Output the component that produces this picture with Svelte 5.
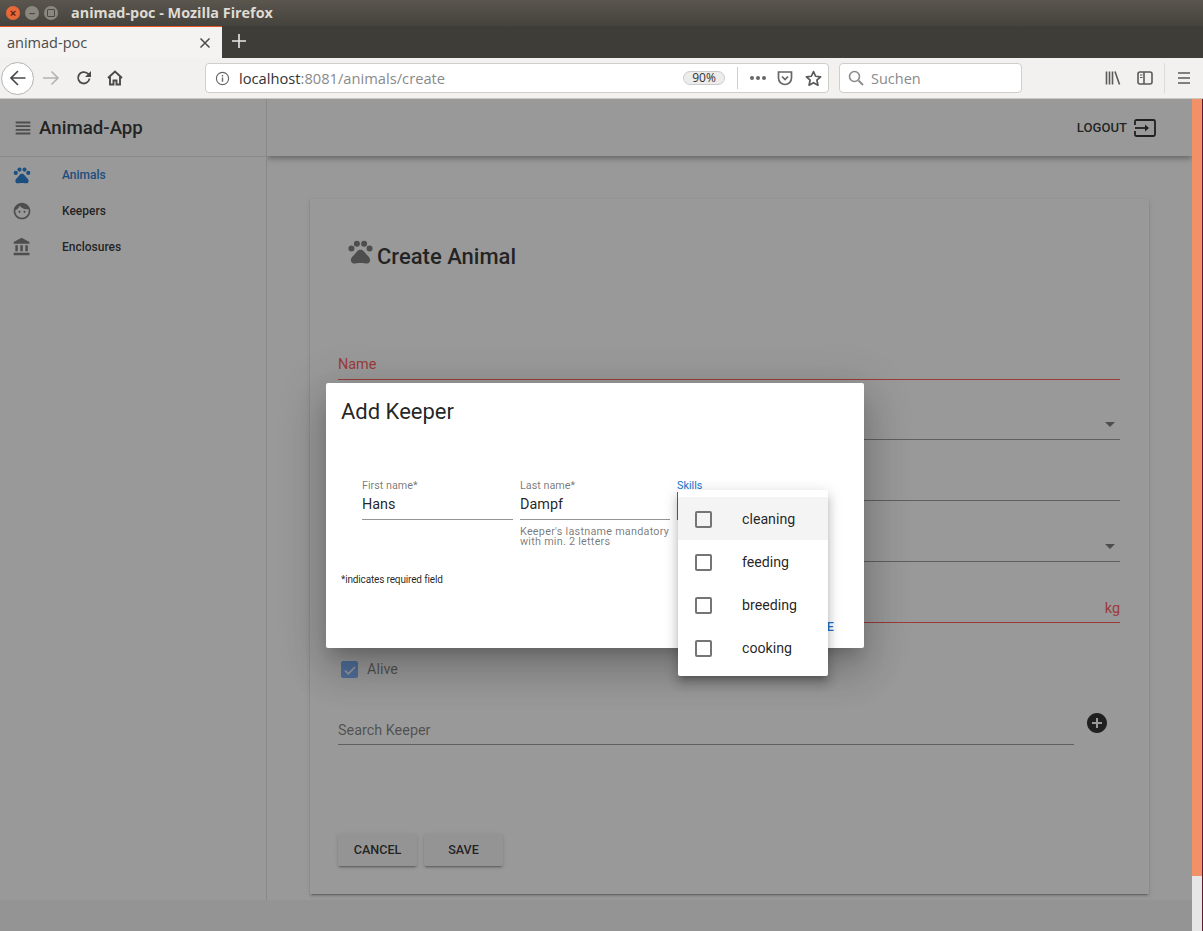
<script>
    const navItems = [
        { label: 'Animals', icon: 'pets', active: true },
        { label: 'Keepers', icon: 'face', active: false },
        { label: 'Enclosures', icon: 'bank', active: false }
    ];
    const skills = ['cleaning', 'feeding', 'breeding', 'cooking'];
    const icons = {
        pets: 'M4.5 7a2.5 2.5 0 1 0 0 5 2.5 2.5 0 0 0 0-5zM9 3a2.5 2.5 0 1 0 0 5 2.5 2.5 0 0 0 0-5zM15 3a2.5 2.5 0 1 0 0 5 2.5 2.5 0 0 0 0-5zM19.5 7a2.5 2.5 0 1 0 0 5 2.5 2.5 0 0 0 0-5zM17.34 14.86c-.87-1.02-1.6-1.89-2.48-2.91-.46-.54-1.05-1.08-1.75-1.32-.11-.04-.22-.07-.33-.09-.25-.04-.52-.04-.78-.04s-.53 0-.79.05c-.11.02-.22.05-.33.09-.7.24-1.28.78-1.75 1.32-.87 1.02-1.6 1.89-2.48 2.91-1.31 1.31-2.92 2.76-2.62 4.79.29 1.02 1.02 2.03 2.33 2.32.73.15 3.06-.44 5.54-.44h.18c2.48 0 4.81.58 5.54.44 1.31-.29 2.04-1.31 2.33-2.32.31-2.04-1.3-3.49-2.61-4.8z',
        face: 'M9 11.75c-.69 0-1.25.56-1.25 1.25s.56 1.25 1.25 1.25 1.25-.56 1.25-1.25-.56-1.25-1.25-1.25zm6 0c-.69 0-1.25.56-1.25 1.25s.56 1.25 1.25 1.25 1.25-.56 1.25-1.25-.56-1.25-1.25-1.25zM12 2C6.48 2 2 6.48 2 12s4.48 10 10 10 10-4.48 10-10S17.52 2 12 2zm0 18c-4.41 0-8-3.59-8-8 0-.29.02-.58.05-.86 2.36-1.05 4.23-2.98 5.21-5.37C11.07 8.33 14.05 10 17.42 10c.78 0 1.53-.09 2.25-.26.21.71.33 1.47.33 2.26 0 4.41-3.59 8-8 8z',
        bank: 'M4 10v7h3v-7H4zm6 0v7h3v-7h-3zM2 22h19v-3H2v3zm14-12v7h3v-7h-3zm-4.5-9L2 6v2h19V6l-9.5-5z'
    };
</script>

<div class="window">
    <header class="titlebar">
        <div class="controls">
            <span class="ctl close">×</span>
            <span class="ctl">–</span>
            <span class="ctl"><i class="square"></i></span>
        </div>
        <span class="wintitle">animad-poc - Mozilla Firefox</span>
    </header>

    <div class="tabbar">
        <div class="tab">
            <span>animad-poc</span>
            <svg class="tabclose" viewBox="0 0 12 12" width="12" height="12"><path d="M1.5 1.5l9 9M10.5 1.5l-9 9" stroke="#4a4a4a" stroke-width="1.5" /></svg>
        </div>
        <svg class="newtab" viewBox="0 0 14 14" width="14" height="14"><path d="M7 0v14M0 7h14" stroke="#e8e8e6" stroke-width="1.6" /></svg>
    </div>

    <div class="navbar">
        <div class="backbtn">
            <svg viewBox="0 0 18 18" width="18" height="18"><path d="M2 9h14.5M9 2L2 9l7 7" fill="none" stroke="#4a4a4a" stroke-width="1.7" /></svg>
        </div>
        <svg class="fwd" viewBox="0 0 18 18" width="18" height="18"><path d="M1 9h15M9.5 2.5L16 9l-6.500 6.500" fill="none" stroke="#b2b2b2" stroke-width="1.6" /></svg>
        <svg class="reload" viewBox="0 0 16 16" width="16" height="16"><path d="M13.500 8.500A5.700 5.700 0 1 1 11.500 3.400L14 5.500" fill="none" stroke="#4a4a4a" stroke-width="1.800" /><path d="M15 1v6H9z" fill="#4a4a4a" /></svg>
        <svg class="home" viewBox="0 0 16 16" width="16" height="16"><path d="M1 8l7-6.500L15 8M3 7v7.500h3.500v-4h3v4H13V7" fill="none" stroke="#4a4a4a" stroke-width="1.900" /></svg>

        <div class="urlbar">
            <svg class="info" viewBox="0 0 16 16" width="15" height="15"><circle cx="8" cy="8" r="6.500" fill="none" stroke="#666" stroke-width="1.200" /><path d="M8 7v4.500M8 4.300v1.500" stroke="#666" stroke-width="1.500" /></svg>
            <span class="url"><b>localhost</b>:8081/animals/create</span>
            <span class="zoombadge">90%</span>
            <i class="urlsep"></i>
            <span class="dots"><i></i><i></i><i></i></span>
            <svg class="pocket" viewBox="0 0 16 16" width="16" height="16"><path d="M1.500 2h13v6a6.500 6.500 0 0 1-13 0z" fill="none" stroke="#666" stroke-width="1.700" /><path d="M5 6.500l3 3 3-3" fill="none" stroke="#666" stroke-width="1.700" /></svg>
            <svg class="star" viewBox="0 0 16 16" width="17" height="17"><path d="M8 1.500l2 4.400 4.700.5-3.500 3.200 1 4.700L8 11.900l-4.200 2.400 1-4.700L1.300 6.400 6 5.900z" fill="none" stroke="#5a5a5a" stroke-width="1.600" stroke-linejoin="round" /></svg>
        </div>

        <div class="searchbar">
            <svg viewBox="0 0 16 16" width="16" height="16"><circle cx="6.500" cy="6.500" r="5" fill="none" stroke="#8a8a8a" stroke-width="1.600" /><path d="M10.500 10.500L15 15" stroke="#8a8a8a" stroke-width="1.800" /></svg>
            <span>Suchen</span>
        </div>

        <div class="tools">
            <svg viewBox="0 0 16 16" width="16" height="16"><path d="M1.500 1.500v13M4.500 1.500v13M7.500 1.500v13M10 1.500l4.500 13" stroke="#5a5a5a" stroke-width="1.600" fill="none" /></svg>
            <svg viewBox="0 0 16 16" width="16" height="16"><rect x="1" y="2" width="14" height="12" rx="2" fill="none" stroke="#5a5a5a" stroke-width="1.600" /><path d="M7 2v12" stroke="#5a5a5a" stroke-width="1.600" /><path d="M3 5h2.500M3 7.500h2.500" stroke="#5a5a5a" stroke-width="1.200" /></svg>
            <i class="toolsep"></i>
            <svg viewBox="0 0 14 14" width="14" height="14"><path d="M1 2h12M1 7h12M1 12h12" stroke="#5a5a5a" stroke-width="1.600" /></svg>
        </div>
    </div>

    <div class="viewport">
        <div class="page">
            <div class="app">
                <aside class="sidebar">
                    <div class="brand">
                        <svg viewBox="0 0 24 24" width="22" height="22"><path d="M4 15h16v-2H4v2zm0 4h16v-2H4v2zm0-8h16V9H4v2zm0-6v2h16V5H4z" fill="#757575" /></svg>
                        <span>Animad-App</span>
                    </div>
                    <nav>
                        {#each navItems as item}
                            <div class="navitem" class:active={item.active}>
                                <svg viewBox="0 0 24 24" width="20" height="20"><path d={icons[item.icon]} /></svg>
                                <span>{item.label}</span>
                            </div>
                        {/each}
                    </nav>
                </aside>

                <main class="main">
                    <div class="toolbar">
                        <span>LOGOUT</span>
                        <svg viewBox="0 0 22 18" width="22" height="18"><path d="M1 6V2.500Q1 1 2.500 1H19.500Q21 1 21 2.500V15.500Q21 17 19.500 17H2.500Q1 17 1 15.500V12" fill="none" stroke="#212121" stroke-width="1.800" /><path d="M1 9H12" stroke="#212121" stroke-width="1.800" /><path d="M11 5.500L15 9l-4 3.500z" fill="#212121" /></svg>
                    </div>

                    <section class="card">
                        <h1>
                            <svg viewBox="0 0 24 24" width="29" height="29"><path d={icons.pets} fill="#757575" /></svg>
                            <span>Create Animal</span>
                        </h1>

                        <div class="field error first"><span>Name</span></div>
                        <div class="field short"><svg class="arrow" viewBox="0 0 10 5" width="10" height="5"><path d="M0 0h10L5 5z" /></svg></div>
                        <div class="field"></div>
                        <div class="field"><svg class="arrow" viewBox="0 0 10 5" width="10" height="5"><path d="M0 0h10L5 5z" /></svg></div>
                        <div class="field error"><em>kg</em></div>

                        <label class="alive">
                            <span class="tick">
                                <svg viewBox="0 0 16 16" width="16" height="16"><path d="M3 8.500l3.300 3.300L13 5" fill="none" stroke="#fff" stroke-width="1.700" /></svg>
                            </span>
                            <span>Alive</span>
                        </label>

                        <div class="keeper">
                            <div class="keeperfield"><span>Search Keeper</span></div>
                            <svg viewBox="0 0 24 24" width="24" height="24"><path d="M12 2C6.480 2 2 6.480 2 12s4.480 10 10 10 10-4.480 10-10S17.520 2 12 2zm5 11h-4v4h-2v-4H7v-2h4V7h2v4h4v2z" fill="#212121" /></svg>
                        </div>

                        <div class="formbtns">
                            <button>CANCEL</button>
                            <button>SAVE</button>
                        </div>
                    </section>
                </main>
            </div>

            <div class="scrim"></div>

            <div class="dialog">
                <h2>Add Keeper</h2>
                <div class="dlgfields">
                    <div class="dlgfield">
                        <label>First name*</label>
                        <div class="value">Hans</div>
                    </div>
                    <div class="dlgfield">
                        <label>Last name*</label>
                        <div class="value">Dampf</div>
                        <p>Keeper's lastname mandatory<br />with min. 2 letters</p>
                    </div>
                    <div class="dlgfield focus">
                        <label>Skills</label>
                        <div class="value"></div>
                    </div>
                </div>
                <small>*indicates required field</small>
                <div class="dlgactions">
                    <span>CLOSE</span>
                    <span>SAVE</span>
                </div>
            </div>

            <div class="menu">
                {#each skills as skill, i}
                    <div class="menuitem" class:hover={i === 0}>
                        <i class="box"></i>
                        <span>{skill}</span>
                    </div>
                {/each}
            </div>
        </div>

        <div class="scrollbar"><div class="thumb"></div></div>
    </div>
</div>

<style>
    :global(body) {
        margin: 0;
        overflow: hidden;
    }

    .window {
        width: 1203px;
        height: 931px;
        display: flex;
        flex-direction: column;
        font-family: Roboto, sans-serif;
        overflow: hidden;
    }

    /* firefox chrome */
    .titlebar {
        height: 26px;
        display: flex;
        align-items: center;
        background: linear-gradient(#5a564e, #45433d);
        flex: none;
    }

    .controls {
        display: flex;
        gap: 5px;
        margin-left: 6px;
        width: 65px;
    }

    .ctl {
        width: 14px;
        height: 14px;
        border-radius: 50%;
        background: #8a877f;
        color: #4a4844;
        font: 700 11px/14px "Liberation Sans", sans-serif;
        text-align: center;
        display: flex;
        align-items: center;
        justify-content: center;
    }

    .ctl.close {
        background: #e9683a;
        color: #5a2412;
    }

    .square {
        width: 6px;
        height: 6px;
        border: 1px solid #4a4844;
        border-radius: 1px;
    }

    .wintitle {
        margin-top: -1px;
        color: #dfdbd2;
        font: 700 14.4px "Open Sans", sans-serif;
    }

    .tabbar {
        height: 32px;
        display: flex;
        align-items: center;
        background: #3e3d38;
        flex: none;
    }

    .tab {
        width: 222px;
        height: 32px;
        box-sizing: border-box;
        border-top: 1px solid #e95420;
        background: #f4f3f1;
        display: flex;
        align-items: center;
        justify-content: space-between;
        padding: 0 11px 0 7px;
        color: #4a4a4a;
        font: 14.5px "Open Sans", sans-serif;
    }

    .newtab {
        margin: -2px 0 0 10px;
    }

    .navbar {
        height: 41px;
        box-sizing: border-box;
        border-bottom: 1px solid #c9c8c6;
        background: #f2f1ef;
        display: flex;
        align-items: center;
        flex: none;
        font-family: "Open Sans", sans-serif;
    }

    .backbtn {
        width: 33px;
        height: 33px;
        margin-left: 1px;
        box-sizing: border-box;
        border: 1px solid #b4b4b2;
        border-radius: 50%;
        background: #fff;
        display: flex;
        align-items: center;
        justify-content: center;
    }

    .fwd {
        margin-left: 8px;
    }

    .reload {
        margin-left: 16px;
    }

    .home {
        margin-left: 15px;
    }

    .urlbar {
        width: 624px;
        height: 30px;
        margin-left: 82px;
        box-sizing: border-box;
        border: 1px solid #cfcecb;
        border-radius: 4px;
        background: #fff;
        display: flex;
        align-items: center;
        padding: 0 6px 0 9px;
    }

    .url {
        margin-left: 9px;
        color: #8a8a8a;
        font-size: 14.7px;
        flex: 1;
    }

    .url b {
        font-weight: 400;
        color: #333;
    }

    .zoombadge {
        width: 42px;
        height: 14px;
        box-sizing: border-box;
        border: 1px solid #ccc;
        border-radius: 8px;
        background: #ececea;
        color: #333;
        font-size: 12px;
        line-height: 12px;
        text-align: center;
    }

    .urlsep {
        width: 1px;
        height: 22px;
        margin: 0 12px 0 12px;
        background: #cfcecb;
    }

    .dots {
        display: flex;
        gap: 2px;
    }

    .dots i {
        width: 4px;
        height: 4px;
        border-radius: 50%;
        background: #666;
    }

    .pocket {
        margin-left: 11px;
    }

    .star {
        margin-left: 12px;
    }

    .searchbar {
        width: 183px;
        height: 30px;
        margin-left: 10px;
        box-sizing: border-box;
        border: 1px solid #cfcecb;
        border-radius: 4px;
        background: #fff;
        display: flex;
        align-items: center;
        gap: 7px;
        padding-left: 8px;
        color: #8a8a8a;
        font-size: 14.500px;
    }

    .tools {
        display: flex;
        align-items: center;
        margin-left: 83px;
    }

    .tools svg:nth-child(2) {
        margin-left: 16px;
    }

    .toolsep {
        width: 1px;
        height: 30px;
        margin: 0 12px 0 11px;
        background: #dcdbd9;
    }

    /* page */
    .viewport {
        flex: 1;
        display: flex;
        min-height: 0;
    }

    .page {
        position: relative;
        width: 1192px;
        flex: none;
        background: #f5f5f5;
        overflow: hidden;
    }

    .app {
        height: 801px;
        display: flex;
        background: #fff;
        color: rgba(0, 0, 0, 0.87);
    }

    .sidebar {
        position: relative;
        z-index: 1;
        width: 267px;
        box-sizing: border-box;
        border-right: 1px solid rgba(0, 0, 0, 0.12);
        background: #fff;
        flex: none;
    }

    .brand {
        height: 58px;
        box-sizing: border-box;
        border-bottom: 1px solid rgba(0, 0, 0, 0.12);
        display: flex;
        align-items: center;
        gap: 5px;
        padding-left: 13px;
        font-size: 18.7px;
        font-weight: 500;
    }

    .brand svg {
        margin-left: -1px;
    }

    nav {
        display: flex;
        flex-direction: column;
    }

    .navitem {
        height: 36px;
        display: flex;
        align-items: center;
        gap: 30px;
        padding-left: 12px;
        font-size: 12px;
        font-weight: 500;
    }

    .navitem svg {
        fill: #757575;
    }

    .navitem.active {
        color: #1976d2;
    }

    .navitem.active svg {
        fill: #1976d2;
    }

    .main {
        flex: 1;
        min-width: 0;
    }

    .toolbar {
        height: 57px;
        display: flex;
        align-items: center;
        justify-content: flex-end;
        gap: 7px;
        padding-right: 36px;
        box-shadow: 0 2px 4px -1px rgba(0, 0, 0, 0.2), 0 4px 5px 0 rgba(0, 0, 0, 0.14), 0 1px 10px 0 rgba(0, 0, 0, 0.12);
        font-size: 13.1px;
        font-weight: 500;
    }

    .card {
        width: 839px;
        height: 695px;
        margin: 43px 0 0 43px;
        box-sizing: border-box;
        padding: 0 29px 0 28px;
        background: #fff;
        box-shadow: 0 3px 1px -2px rgba(0, 0, 0, 0.2), 0 2px 2px 0 rgba(0, 0, 0, 0.14), 0 1px 5px 0 rgba(0, 0, 0, 0.12);
    }

    h1 {
        height: 78px;
        margin: 0;
        padding: 18px 0 0 8px;
        display: flex;
        align-items: center;
        font-size: 22px;
        font-weight: 500;
    }

    h1 svg {
        margin: -10px 2px 0 0;
    }

    .field {
        height: 61px;
        box-sizing: border-box;
        border-bottom: 1px solid rgba(0, 0, 0, 0.42);
        display: flex;
        align-items: flex-end;
        justify-content: space-between;
        padding-bottom: 6px;
        font-size: 14.400px;
    }

    .field.first {
        height: 85px;
    }

    .field.short {
        height: 60px;
    }

    .field.error {
        border-bottom-color: #ff5252;
        color: #ff5252;
    }

    .field em {
        margin: 0 0 -1px auto;
        font-style: normal;
    }

    .arrow {
        margin: 0 5px 0 auto;
        position: relative;
        top: -6px;
        fill: #757575;
    }

    .alive {
        margin: 38px 0 0 3px;
        display: flex;
        align-items: center;
        gap: 9px;
        color: rgba(0, 0, 0, 0.54);
        font-size: 14.400px;
    }

    .tick {
        width: 17px;
        height: 17px;
        border-radius: 2px;
        background: #78aeff;
        display: flex;
        align-items: center;
        justify-content: center;
    }

    .keeper {
        margin-top: 35px;
        display: flex;
        align-items: flex-start;
    }

    .keeper svg {
        margin: -2px 0 0 11px;
    }

    .keeperfield {
        width: 736px;
        height: 32px;
        box-sizing: border-box;
        border-bottom: 1px solid rgba(0, 0, 0, 0.42);
        padding-top: 9px;
        color: rgba(0, 0, 0, 0.54);
        font-size: 14.400px;
    }

    .formbtns {
        margin-top: 89px;
        display: flex;
        gap: 7px;
    }

    .formbtns button {
        width: 79px;
        height: 32px;
        padding: 0 0 2px;
        border: 0;
        border-radius: 2px;
        background: #f5f5f5;
        box-shadow: 0 3px 1px -2px rgba(0, 0, 0, 0.2), 0 2px 2px 0 rgba(0, 0, 0, 0.14), 0 1px 5px 0 rgba(0, 0, 0, 0.12);
        color: rgba(0, 0, 0, 0.87);
        font: 500 12.600px Roboto, sans-serif;
    }

    .scrim {
        position: absolute;
        inset: 0;
        z-index: 2;
        background: rgba(33, 33, 33, 0.46);
    }

    .dialog {
        position: absolute;
        z-index: 3;
        left: 326px;
        top: 284px;
        width: 538px;
        height: 265px;
        box-sizing: border-box;
        padding: 14px 15px 0;
        display: flex;
        flex-direction: column;
        border-radius: 2px;
        background: #fff;
        color: rgba(0, 0, 0, 0.87);
        box-shadow: 0 11px 15px -7px rgba(0, 0, 0, 0.2), 0 24px 38px 3px rgba(0, 0, 0, 0.14), 0 9px 46px 8px rgba(0, 0, 0, 0.12);
    }

    h2 {
        margin: 0;
        font-size: 22px;
        font-weight: 400;
        line-height: 30px;
    }

    .dlgfields {
        margin: 53px 0 0 21px;
        height: 94px;
        display: grid;
        grid-template-columns: 151px 150px 151px;
        column-gap: 7px;
    }

    .dlgfield label {
        display: block;
        color: rgba(0, 0, 0, 0.54);
        font-size: 10.800px;
        line-height: 12px;
    }

    .dlgfield .value {
        height: 28px;
        box-sizing: border-box;
        border-bottom: 1px solid rgba(0, 0, 0, 0.42);
        padding-top: 4px;
        font-size: 14.400px;
        line-height: 18px;
    }

    .dlgfield p {
        margin: 7px 0 0;
        color: rgba(0, 0, 0, 0.54);
        font-size: 10.800px;
        line-height: 10px;
        letter-spacing: 0.25px;
    }

    .dlgfield.focus label {
        color: #1976d2;
    }

    .dlgfield.focus .value {
        border-bottom: 2px solid #1976d2;
        border-left: 1px solid #1976d2;
    }

    small {
        font-size: 10px;
        line-height: 12px;
        letter-spacing: -0.15px;
    }

    .dlgactions {
        margin-top: 33px;
        display: flex;
        justify-content: flex-end;
        gap: 28px;
        padding-right: 15px;
        color: #1976d2;
        font-size: 12.600px;
        font-weight: 500;
    }

    .menu {
        position: absolute;
        z-index: 4;
        left: 678px;
        top: 391px;
        width: 150px;
        box-sizing: border-box;
        padding: 7px 0;
        border-radius: 2px;
        background: #fff;
        color: rgba(0, 0, 0, 0.87);
        box-shadow: 0 5px 5px -3px rgba(0, 0, 0, 0.2), 0 8px 10px 1px rgba(0, 0, 0, 0.14), 0 3px 14px 2px rgba(0, 0, 0, 0.12);
    }

    .menuitem {
        height: 43px;
        box-sizing: border-box;
        padding: 1px 0 0 17px;
        display: flex;
        align-items: center;
        gap: 30px;
        font-size: 14.200px;
    }

    .menuitem.hover {
        background: #f4f4f4;
    }

    .box {
        width: 17px;
        height: 17px;
        box-sizing: border-box;
        border: 2px solid #757575;
        border-radius: 2px;
    }

    .scrollbar {
        flex: 1;
        background: #e6e6e6;
        border-right: 1px solid #5a1c30;
    }

    .thumb {
        height: 777px;
        background: #f29068;
    }
</style>
